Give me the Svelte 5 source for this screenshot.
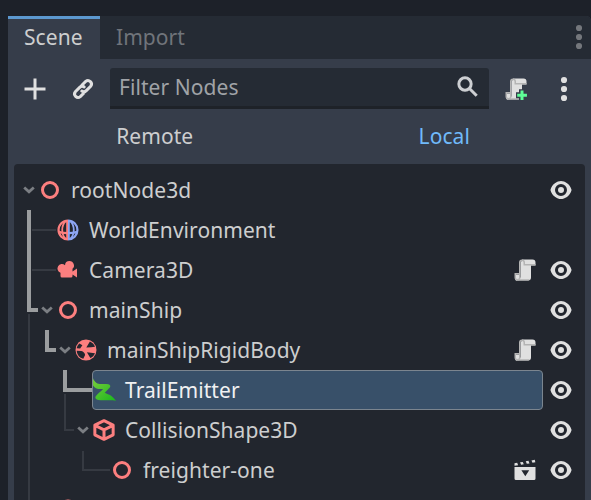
<script>
  const rows = [
    { name: 'rootNode3d', depth: 0, icon: 'node', open: true },
    { name: 'WorldEnvironment', depth: 1, icon: 'globe', hideEye: true },
    { name: 'Camera3D', depth: 1, icon: 'camera', extra: 'script' },
    { name: 'mainShip', depth: 1, icon: 'node', open: true },
    { name: 'mainShipRigidBody', depth: 2, icon: 'rigid', open: true, extra: 'script' },
    { name: 'TrailEmitter', depth: 3, icon: 'trail', selected: true },
    { name: 'CollisionShape3D', depth: 3, icon: 'cube', open: true },
    { name: 'freighter-one', depth: 4, icon: 'node', extra: 'scene' },
    { name: '', depth: 1, icon: 'ball', hideEye: true }
  ];
</script>

{#snippet icon(kind)}
  <svg class="icon" viewBox="0 0 16 16" width="24" height="24">
    {#if kind === 'node'}
      <circle cx="8" cy="8" r="5" fill="none" stroke="#fc7f7f" stroke-width="2" />
    {:else if kind === 'ball'}
      <circle cx="8" cy="8" r="7" fill="#fc7f7f" />
    {:else if kind === 'globe'}
      <g fill="none" stroke-width="1.5">
        <path stroke="#fc7f7f" d="M8 1.7a6.3 6.3 0 0 0 0 12.6M1.8 9.2q3 .9 6.2.9" />
        <path stroke="#8da5f3" d="M8 1.7a6.3 6.3 0 0 1 0 12.6M14.2 9.2q-3 .9-6.2.9" />
      </g>
      <g fill="none" stroke-width="1.2">
        <path stroke="#fc7f7f" d="M7.4 1.7v12.6M6.4 2.2C3.4 5 3.4 11 6.4 13.8" />
        <path stroke="#8da5f3" d="M8.6 1.7v12.6M9.6 2.2c3 2.8 3 8.8 0 11.6" />
      </g>
    {:else if kind === 'camera'}
      <path fill="#fc7f7f" d="M9 2a3 3 0 0 0-3 2.777 3 3 0 1 0-3 5.047V12a1 1 0 0 0 1 1h6a1 1 0 0 0 1-1v-1l3 2V7l-3 2V7.23A3 3 0 0 0 9 2z" />
    {:else if kind === 'rigid'}
      <circle cx="8" cy="8" r="7" fill="#fc7f7f" />
      <path fill="#22262e" d="M1.8 6.8c.3-1.3.9-2.3 1.8-3.1l2 1.1-1.5 2.2zM1.8 8.5l3.1.2c1.4.3 2.3 1.4 2.5 2.6l-1.2 2.6C3.7 13.2 2 11.2 1.8 8.5zM8.2 6.3l2.4-3.9c1.6.7 2.8 1.9 3.4 3.5l-2.6.2zM8.6 9.5l5.4.6c-.6 1.5-1.7 2.6-3.1 3.3z" />
    {:else if kind === 'trail'}
      <path fill="url(#trail)" d="M.7.2C1.3 1.8 2.2 3 3.6 3.6c2.4.7 5 0 7.3.6 1.2.3 1.6 1.1 1.1 2L8.5 9.9c1.2.9 2.9 1 4.2 1.9 1.2 1 2.2 2 3.3 3.3-4.2-.7-8 .1-11.8-.4-1.4-.2-2.4-1.3-1.8-2.3.9-1.7 3.5-3.1 5-5-1.2-.3-2.6.3-3.8-.2C2.3 6.7 1.3 6.1.7 5z" />
    {:else if kind === 'cube'}
      <path fill="none" stroke="#fc7f7f" stroke-width="2" stroke-linejoin="round" d="m8 1.8 6.1 3v6.4l-6.1 3-6.1-3V4.8zM2 4.9l6 3 6-3M8 7.9v6" />
    {:else if kind === 'eye'}
      <path fill="#e0e0e0" d="M8 2C5.443 2 2.209 3.948 1.045 7.705a1 1 0 0 0 0 .582C2.163 12 5.5 14 8 14s5.836-1.975 6.961-5.705a1 1 0 0 0 0-.582C13.861 3.935 10.557 2 8 2zm0 2a4 4 0 0 1 0 8 4 4 0 0 1 0-8zm0 2a2 2 0 0 0 0 4 2 2 0 0 0 0-4z" />
    {:else if kind === 'script' || kind === 'scriptadd'}
      <path fill="#e0e0e0" d="M6 1v1a1 1 0 0 0-1 1v10H4v-2H2v2a1 1 0 0 0 1 2h7a2 2 0 0 0 2-2V5h3V3a2 2 0 0 0-2-2z" />
      <path fill="#b4b4b4" d="M6 1a2 2 0 0 0-2 2v7H1v3a2 2 0 0 0 4 0V3a1 1 0 0 1 2 0v2h8V4H8V3a2 2 0 0 0-2-2zM2 11h2v2a1 1 0 0 1-2 0z" />
      <path fill="#b4b4b4" d="M3 14.2h8.3l-.8.8H3z" />
      {#if kind === 'scriptadd'}
        <path fill="#363d4a" d="M10 8.2h4v2h2v4h-2V16h-4v-1.8H8v-4h2z" />
        <path fill="#5fff97" d="M11 9h2v2.2h2.3v2H13v2.1h-2v-2.1H8.8v-2H11z" />
      {/if}
    {:else if kind === 'scene'}
      <path fill="#e0e0e0" fill-rule="evenodd" d="M1 6h14v7.6a1 1 0 0 1-1 1H2a1 1 0 0 1-1-1zm4.6 2.2 2.6 4 2.6-4zM1 3.5l1.8-.3.6 1.6-2.4.4zM4.7 2.9l1.8-.3.7 1.6-1.8.3zM8.5 2.2l1.8-.3.7 1.7-1.8.3zM12.3 1.6l2.2-.4.4 1.7-1.9.3z" />
    {:else if kind === 'add'}
      <path fill="#e0e0e0" d="M7 1v6H1v2h6v6h2V9h6V7H9V1z" />
    {:else if kind === 'link'}
      <g fill="none" stroke="#e0e0e0" stroke-width="2" stroke-linecap="round">
        <path d="M7.2 5.5 9.8 2.9a2.35 2.35 0 0 1 3.3 3.3l-2.9 2.9a2.35 2.35 0 0 1-3 .3M8.8 10.5l-2.6 2.6a2.35 2.35 0 0 1-3.3-3.3l2.9-2.9a2.35 2.35 0 0 1 3-.3" />
      </g>
    {:else if kind === 'search'}
      <g fill="none" stroke="#cdcfd2" stroke-width="2"><circle cx="6" cy="6" r="4.1" /><path d="m8.8 8.8 5 5" /></g>
    {:else if kind === 'dots'}
      <g fill="currentColor"><circle cx="8" cy="2" r="2.05" /><circle cx="8" cy="8" r="2.05" /><circle cx="8" cy="14" r="2.05" /></g>
    {/if}
  </svg>
{/snippet}

<svg class="defs" width="0" height="0">
  <linearGradient id="trail" x1="0" y1="0" x2="1" y2="1">
    <stop offset="0" stop-color="#7acb3c" /><stop offset="1" stop-color="#18b81c" />
  </linearGradient>
</svg>

<div class="screen">
  <div class="dock">
    <div class="tabs">
      <div class="tab active">Scene</div>
      <div class="tab">Import</div>
      <div class="tabmenu">{@render icon('dots')}</div>
    </div>
    <div class="tools">
      <div class="tool add">{@render icon('add')}</div>
      <div class="tool link">{@render icon('link')}</div>
      <div class="filter"><span>Filter Nodes</span>{@render icon('search')}</div>
      <div class="tool attach">{@render icon('scriptadd')}</div>
      <div class="tool more">{@render icon('dots')}</div>
    </div>
    <div class="modes">
      <span>Remote</span>
      <span class="on">Local</span>
    </div>
    <div class="tree">
      <svg class="lines" width="571" height="336" viewBox="14 164 571 336" fill="none">
        <path stroke="#363a42" stroke-width="2" d="M32 230h24M32 270h24M29 314v186M65 394v36h9M83 451v19h27" />
        <path stroke="#9b9d9f" stroke-width="4" d="M29 210v100h9M47 330v20h9M65 370v20h28" />
      </svg>
      {#each rows as row}
        <div class="row" style:padding-left="{6 + row.depth * 18}px">
          <div class="arrow">
            {#if row.open}
              <svg width="12" height="8" viewBox="0 0 12 8"><path d="m1.2 1.5 4.8 4.3 4.8-4.3" fill="none" stroke="#7b7e83" stroke-width="2.8" /></svg>
            {/if}
          </div>
          <div class="cell" class:selected={row.selected}>
            {@render icon(row.icon)}<span>{row.name}</span>
          </div>
          <div class="buttons">
            {#if row.extra}{@render icon(row.extra)}{/if}
            {#if !row.hideEye}{@render icon('eye')}{/if}
          </div>
        </div>
      {/each}
    </div>
  </div>
</div>

<style>
  .screen { box-sizing: border-box; width: 591px; height: 500px; overflow: hidden; padding: 16px 0 0 8px; background: #1d2129; color: #cdcecf; font: 21px/40px 'Noto Sans', sans-serif; letter-spacing: 0.06px; white-space: nowrap; }
  .defs { position: absolute; }
  .icon { display: block; flex: none; overflow: visible; }
  .dock { height: 484px; background: #363d4a; border-top-right-radius: 5px; overflow: hidden; }
  .tabs { display: flex; height: 43px; background: #252b34; color: #70747a; }
  .tab { box-sizing: border-box; height: 43px; padding: 1px 16px 0; }
  .tab.active { width: 92px; padding-top: 0; border-top: 3px solid #5c98cf; background: #363d4a; color: #cdcecf; line-height: 37px; }
  .tab:not(.active) { line-height: 41px; }
  .tabmenu { margin-left: auto; padding-top: 9px; color: #74777c; }
  .tools { display: flex; height: 59px; align-items: center; color: #e0e0e0; }
  .tool { display: flex; justify-content: center; width: 24px; }
  .add { margin-left: 15px; }
  .link { margin-left: 24px; }
  .filter { box-sizing: border-box; display: flex; align-items: center; justify-content: space-between; width: 379px; height: 41px; margin-left: 15px; padding: 0 9px; border-bottom: 3px solid #1e2228; border-radius: 3px 3px 0 0; background: #252b34; color: #a0a3a7; }
  .attach { margin-left: 15px; }
  .more { margin-left: 24px; }
  .modes { display: flex; height: 46px; padding: 0 2px; line-height: 37px; }
  .modes span { width: 50%; text-align: center; }
  .modes .on { color: #70bafa; }
  .tree { position: relative; height: 336px; margin: 0 6px; border-radius: 4px 4px 0 0; background: #22262e; overflow: hidden; padding-top: 6px; box-sizing: border-box; }
  .lines { position: absolute; left: 0; top: 0; }
  .row { position: relative; display: flex; align-items: center; box-sizing: border-box; height: 40px; }
  .arrow { display: flex; width: 18px; padding-left: 3px; box-sizing: border-box; align-items: center; }
  .cell { box-sizing: border-box; display: flex; align-items: center; gap: 9px; flex: 1; height: 40px; line-height: 38px; border: 1px solid transparent; border-left-width: 0; }
  .cell.selected { border: 1px solid #7b858f; border-radius: 4px; background: #385069; color: #f0f1f2; }
  .cell.selected .icon { margin-left: -1px; }
  .buttons { display: flex; justify-content: flex-end; gap: 12px; width: 42px; padding-right: 12px; box-sizing: border-box; }
  .buttons .icon:first-child:not(:last-child) { margin-left: -36px; }
</style>
